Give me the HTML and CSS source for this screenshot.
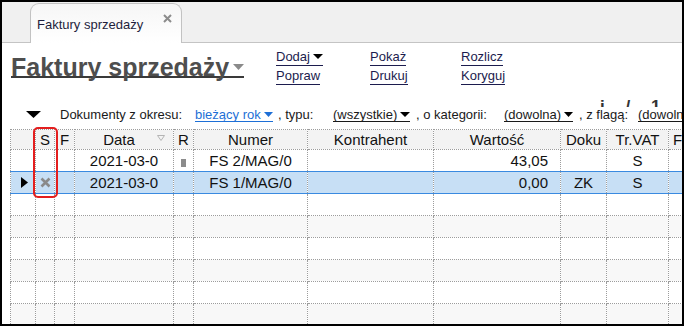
FILE: index.html
```html
<!DOCTYPE html>
<html lang="pl">
  <head>
    <meta charset="UTF-8" />
    <title>Faktury sprzedaży</title>
    <link rel="stylesheet" href="styles.css">
  </head>
  <body>
    <div class="window">
      <div class="tabbar">
        <div class="tab">
          <span class="tab-title">Faktury sprzedaży</span>
          <svg class="tab-close" width="9" height="9" viewBox="0 0 9 9">
            <path d="M1 1L8 8M8 1L1 8" stroke="#8c8c8c" stroke-width="2" />
          </svg>
        </div>
      </div>

      <div class="content">
        <div class="head">
          <h1 class="title">
            <span class="u">Faktury sprzedaży<svg class="title-arrow" width="11" height="6" viewBox="0 0 11 6"><path d="M0 0H11L5.5 6Z" fill="#8a8a8a" /></svg></span>
          </h1>
          <div class="menu">
            <a class="u">Dodaj<svg class="drop" width="10" height="5" viewBox="0 0 10 5"><path d="M0 0H10L5 5Z" fill="#000" /></svg></a>
            <a class="u">Pokaż</a>
            <a class="u">Rozlicz</a>
            <a class="u">Popraw</a>
            <a class="u">Drukuj</a>
            <a class="u">Koryguj</a>
          </div>
        </div>

        <div class="filter">
          <span class="filter-menu">
            <svg width="15" height="7" viewBox="0 0 15 7"><path d="M0 0H15L7.5 7Z" fill="#000" /></svg>
          </span>
          <span>Dokumenty z okresu:</span>
          <span><span class="u link">bieżący rok<svg class="drop" width="9" height="5" viewBox="0 0 9 5"><path d="M0 0H9L4.5 5Z" fill="#1d6fd6" /></svg></span></span>
          <span>, typu:</span>
          <span><span class="u">(wszystkie)<svg class="drop" width="10" height="5" viewBox="0 0 10 5"><path d="M0 0H10L5 5Z" fill="#000" /></svg></span></span>
          <span>, o kategorii:</span>
          <span><span class="u">(dowolna)<svg class="drop" width="9" height="5" viewBox="0 0 9 5"><path d="M0 0H9L4.5 5Z" fill="#000" /></svg></span></span>
          <span>, z flagą:</span>
          <span><span class="u">(dowolna)</span></span>
        </div>

        <table class="grid">
          <colgroup>
            <col class="c-ind" />
            <col class="c-s" />
            <col class="c-f" />
            <col class="c-data" />
            <col class="c-r" />
            <col class="c-num" />
            <col class="c-kon" />
            <col class="c-war" />
            <col class="c-dok" />
            <col class="c-vat" />
            <col class="c-f2" />
          </colgroup>
          <thead>
            <tr>
              <th></th>
              <th>S</th>
              <th>F</th>
              <th>
                <div class="sort-head">
                  <span>Data</span>
                  <svg width="8" height="6" viewBox="0 0 8 6"><path d="M0.5 0.5H7.5L4 5.5Z" fill="none" stroke="#b4b4b4" /></svg>
                </div>
              </th>
              <th>R</th>
              <th>Numer</th>
              <th>Kontrahent</th>
              <th>Wartość</th>
              <th>Doku</th>
              <th>Tr.VAT</th>
              <th class="left">F</th>
            </tr>
          </thead>
          <tbody>
            <tr>
              <td></td>
              <td></td>
              <td></td>
              <td>2021-03-0</td>
              <td><span class="r-flag"></span></td>
              <td>FS 2/MAG/0</td>
              <td></td>
              <td class="num">43,05</td>
              <td></td>
              <td>S</td>
              <td></td>
            </tr>
            <tr class="sel">
              <td>
                <svg class="row-ptr" width="7" height="11" viewBox="0 0 7 11"><path d="M0 0L7 5.5L0 11Z" fill="#000" /></svg>
              </td>
              <td>
                <svg class="cross" width="11" height="11" viewBox="0 0 11 11"><path d="M1.5 1.5L9.5 9.5M9.5 1.5L1.5 9.5" stroke="#8a8a8a" stroke-width="2.6" /></svg>
              </td>
              <td></td>
              <td>2021-03-0</td>
              <td></td>
              <td>FS 1/MAG/0</td>
              <td></td>
              <td class="num">0,00</td>
              <td>ZK</td>
              <td>S</td>
              <td></td>
            </tr>
            <tr><td></td><td></td><td></td><td></td><td></td><td></td><td></td><td></td><td></td><td></td><td></td></tr>
            <tr class="alt"><td></td><td></td><td></td><td></td><td></td><td></td><td></td><td></td><td></td><td></td><td></td></tr>
            <tr><td></td><td></td><td></td><td></td><td></td><td></td><td></td><td></td><td></td><td></td><td></td></tr>
            <tr class="alt"><td></td><td></td><td></td><td></td><td></td><td></td><td></td><td></td><td></td><td></td><td></td></tr>
            <tr><td></td><td></td><td></td><td></td><td></td><td></td><td></td><td></td><td></td><td></td><td></td></tr>
            <tr class="alt"><td></td><td></td><td></td><td></td><td></td><td></td><td></td><td></td><td></td><td></td><td></td></tr>
          </tbody>
        </table>
      </div>

      <div class="page-no">i / 1 2</div>
      <div class="mark"></div>
    </div>
  </body>
</html>
```

FILE: styles.css
```css
body {
  margin: 0;
  background: #fff;
}

.window {
  position: relative;
  width: 684px;
  height: 326px;
  box-sizing: border-box;
  border: 2px solid #000;
  overflow: hidden;
  background: #fff;
  font-family: "Liberation Sans", Arial, sans-serif;
  color: #111;
}

/* tab strip */
.tabbar {
  height: 40px;
  display: flex;
  align-items: flex-end;
  background: #f0f0f0;
  border-bottom: 1px solid #c4c4c4;
}

.tab {
  display: flex;
  align-items: flex-start;
  width: 152px;
  height: 40px;
  margin-left: 28px;
  margin-bottom: -1px;
  box-sizing: border-box;
  padding: 13px 0 0 6px;
  border: 1px solid #c2c2c2;
  border-bottom: none;
  border-radius: 9px 9px 0 0;
  background: linear-gradient(#f6f6f6, #ffffff);
}

.tab-title {
  font-size: 13px;
  line-height: 15px;
  color: #1e1e3c;
}

.tab-close {
  margin: -3px 9px 0 auto;
}

.content {
  padding-left: 8px;
}

/* underline drawn behind the glyphs, like the original control */
.u {
  background-image: linear-gradient(currentColor, currentColor);
  background-size: 100% 1px;
  background-position: 0 100%;
  background-repeat: no-repeat;
}

.head {
  display: flex;
  align-items: flex-start;
  padding-top: 4px;
  height: 42px;
  box-sizing: border-box;
}

.title {
  flex: none;
  width: 266px;
  margin: 5px 0 0 0;
  padding-left: 1px;
  box-sizing: border-box;
  font-size: 25px;
  line-height: 30px;
  font-weight: bold;
  color: #4e4e4e;
  white-space: nowrap;
}

.title .u {
  background-image: linear-gradient(#3a3a3a, #3a3a3a);
  background-size: 100% 2px;
  background-position: 0 88%;
}

.title-arrow {
  margin-left: 4px;
  vertical-align: 6px;
}

.menu {
  display: grid;
  grid-template-columns: 94px 91px 100px;
  grid-auto-rows: 19px;
  font-size: 13px;
  line-height: 19px;
}

.menu a {
  justify-self: start;
  color: #1c1c4e;
  cursor: pointer;
}

.drop {
  margin-left: 3px;
  vertical-align: 2px;
}

/* filter line */
.filter {
  display: grid;
  grid-template-columns: 50px 135px 83px 55px 83px 88px 75px 59px 80px;
  margin-top: 20px;
  height: 20px;
  font-size: 13px;
  line-height: 20px;
  color: #1a1a1a;
  white-space: nowrap;
}

.filter-menu svg {
  margin-left: 16px;
  vertical-align: 1px;
}

.link {
  color: #1d6fd6;
}

/* data grid */
.grid {
  margin-top: 4px;
  table-layout: fixed;
  border-collapse: collapse;
  width: 699px;
  font-size: 15px;
  color: #111;
}

.c-ind { width: 25px; }
.c-s { width: 19px; }
.c-f { width: 20px; }
.c-data { width: 99px; }
.c-r { width: 20px; }
.c-num { width: 114px; }
.c-kon { width: 126px; }
.c-war { width: 127px; }
.c-dok { width: 46px; }
.c-vat { width: 62px; }
.c-f2 { width: 40px; }

.grid th,
.grid td {
  padding: 0;
  border: 1px dotted #9c9c9c;
  text-align: center;
  vertical-align: middle;
  white-space: nowrap;
  overflow: hidden;
}

.grid thead tr {
  height: 20px;
}

.grid th {
  font-weight: normal;
  background: #f3f3f3;
}

.grid th.left {
  text-align: left;
  padding-left: 4px;
}

.grid tbody tr {
  height: 22px;
}

.grid tr.alt td {
  background: #f8f8f8;
}

.grid td.num {
  text-align: right;
  padding-right: 12px;
}

.sort-head {
  display: flex;
  align-items: center;
}

.sort-head span {
  flex: 1;
  text-align: center;
  padding-left: 6px;
}

.sort-head svg {
  margin-right: 8px;
  margin-top: -3px;
}

.r-flag {
  display: inline-block;
  width: 5px;
  height: 8px;
  background: #8c8c8c;
  vertical-align: -1px;
}

.grid tr.sel td {
  background: #c7dff5;
  border-top: 1px solid #3a8ae0;
  border-bottom: 1px solid #3a8ae0;
}

.row-ptr {
  display: block;
  margin-left: 10px;
}

.cross {
  display: block;
  margin: 0 auto;
}

/* partial page counter, clipped under the filter line */
.page-no {
  position: absolute;
  left: 598px;
  top: 98px;
  height: 7px;
  overflow: hidden;
  font-size: 17px;
  font-weight: bold;
  line-height: 14px;
  color: #333;
  letter-spacing: 8px;
}

/* red annotation around the S column */
.mark {
  position: absolute;
  left: 31px;
  top: 125px;
  width: 25px;
  height: 71px;
  box-sizing: border-box;
  border: 2px solid #e41e1e;
  border-radius: 5px;
}
```
